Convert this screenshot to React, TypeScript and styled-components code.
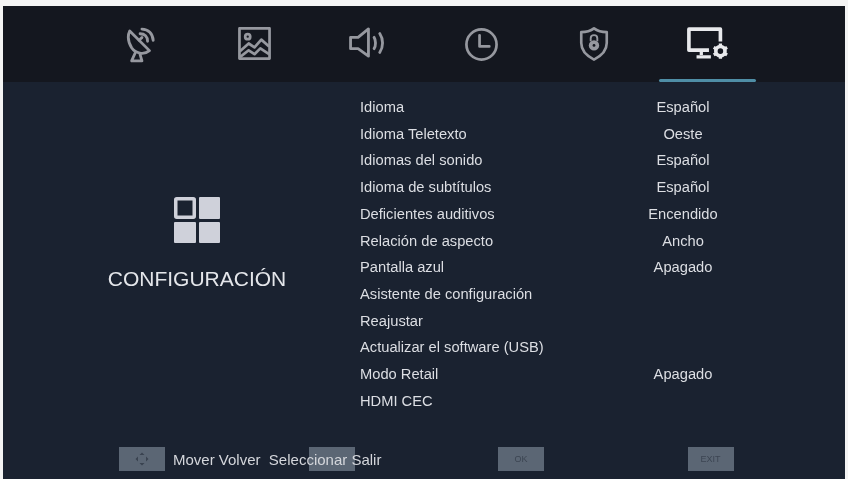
import React from 'react';
import styled, { createGlobalStyle } from 'styled-components';

const GlobalStyle = createGlobalStyle`
  html, body {
    margin: 0;
    padding: 0;
    background: #f4f4f4;
  }
  body {
    font-family: "Liberation Sans", Arial, sans-serif;
  }
`;

const Screen = styled.div`
  width: 842px;
  height: 473px;
  margin: 6px 0 0 3px;
  background: #1a2230;
  display: flex;
  flex-direction: column;
  overflow: hidden;
  filter: blur(0.45px);
`;

const TabBar = styled.div`
  height: 76px;
  flex: none;
  background: #14171f;
  padding-left: 81px;
  display: flex;
  box-sizing: border-box;
`;

const Tab = styled.div<{ $width: number; $active?: boolean }>`
  width: ${(p) => p.$width}px;
  height: 76px;
  box-sizing: border-box;
  display: flex;
  align-items: flex-start;
  justify-content: center;
  padding-top: 21px;
  color: ${(p) => (p.$active ? '#e8e9ec' : '#96989f')};
  position: relative;
  &::after {
    content: '';
    display: ${(p) => (p.$active ? 'block' : 'none')};
    position: absolute;
    left: 50%;
    bottom: 0;
    width: 97px;
    height: 3px;
    margin-left: -49px;
    border-radius: 2px;
    background: #4f8ea6;
  }
  svg {
    display: block;
  }
`;

const Main = styled.div`
  flex: 1;
  display: flex;
  min-height: 0;
`;

const SidePanel = styled.div`
  width: 357px;
  flex: none;
  box-sizing: border-box;
  padding: 115px 0 0 31px;
  display: flex;
  flex-direction: column;
  align-items: center;
`;

const SideIcon = styled.svg`
  display: block;
  margin-bottom: 24px;
`;

const SideTitle = styled.div`
  font-size: 21px;
  line-height: 24px;
  color: #e4e6ea;
  white-space: nowrap;
`;

const SettingList = styled.div`
  padding-top: 12px;
  display: flex;
  flex-direction: column;
`;

const SettingRow = styled.div`
  height: 26.72px;
  line-height: 26.72px;
  display: grid;
  grid-template-columns: 245px 156px;
  font-size: 14.7px;
  color: #dcdee3;
  white-space: nowrap;
`;

const SettingValue = styled.span`
  text-align: center;
`;

const Footer = styled.div`
  height: 32px;
  flex: none;
  padding-left: 116px;
  display: flex;
  align-items: flex-start;
  box-sizing: border-box;
`;

const FooterCell = styled.div`
  width: 189.5px;
  flex: none;
  display: flex;
  align-items: center;
  gap: 8px;
`;

const KeyCap = styled.div`
  width: 46px;
  height: 24px;
  flex: none;
  background: #5b6674;
  color: #3c4552;
  font-size: 9px;
  display: flex;
  align-items: center;
  justify-content: center;
`;

const FooterLabel = styled.span`
  position: relative;
  z-index: 1;
  font-size: 15px;
  color: #d4d6db;
  white-space: pre;
`;

const settings: [string, string][] = [
  ['Idioma', 'Español'],
  ['Idioma Teletexto', 'Oeste'],
  ['Idiomas del sonido', 'Español'],
  ['Idioma de subtítulos', 'Español'],
  ['Deficientes auditivos', 'Encendido'],
  ['Relación de aspecto', 'Ancho'],
  ['Pantalla azul', 'Apagado'],
  ['Asistente de configuración', ''],
  ['Reajustar', ''],
  ['Actualizar el software (USB)', ''],
  ['Modo Retail', 'Apagado'],
  ['HDMI CEC', ''],
];

const SatelliteIcon = () => (
  <svg width="30" height="36" viewBox="0 0 32 38" fill="none" stroke="currentColor" strokeWidth="3" strokeLinejoin="round" strokeLinecap="round">
    <path d="M4 4 L25 25 C19 30 10 28 6 22 C2.500 16 1 10 4 4 Z" />
    <path d="M10 27 L6 36 H17 L15 29" />
    <path d="M15 7 C20 7 23 10 23 15" />
    <path d="M17 2 C24 2 28.500 7 29 14" />
    <path d="M14 14 L17 11" />
  </svg>
);

const PictureIcon = () => (
  <svg width="33" height="33" viewBox="0 0 34 34" fill="none" stroke="currentColor" strokeWidth="2.8" strokeLinejoin="round">
    <rect x="1.500" y="1.500" width="31" height="31" />
    <circle cx="10" cy="10" r="2.600" />
    <path d="M2 25 L11 17 L17 21 L24 13 L32 20" />
    <path d="M2 31 L11 24 L17 28 L23 22 L32 28" />
  </svg>
);

const SpeakerIcon = () => (
  <svg width="39" height="32" viewBox="0 0 40 34" fill="none" stroke="currentColor" strokeWidth="3" strokeLinejoin="round" strokeLinecap="round">
    <path d="M21 2 V31 L10 23 H2 V11 H10 Z" />
    <path d="M27 11 C29 14 29 20 27 23" />
    <path d="M33 7 C37 13 37 21 33 27" />
  </svg>
);

const ClockIcon = () => (
  <svg width="35" height="35" viewBox="0 0 36 36" fill="none" stroke="currentColor" strokeWidth="2.8" strokeLinecap="round" strokeLinejoin="round">
    <circle cx="18" cy="18" r="15.500" />
    <path d="M16 8.500 V20 H26" />
  </svg>
);

const ShieldIcon = () => (
  <svg width="30" height="34" viewBox="0 0 30 36" fill="none" stroke="currentColor" strokeWidth="2.8" strokeLinejoin="round">
    <path d="M15 1.500 C19 4.500 24 5.500 28.500 5.500 V17 C28.500 25 22 31 15 34.500 C8 31 1.500 25 1.500 17 V5.500 C6 5.500 11 4.500 15 1.500 Z" />
    <path d="M11.500 15 V12 C11.500 7.500 18.500 7.500 18.500 12 V15" strokeWidth="2" />
    <circle cx="15" cy="19.500" r="5.500" fill="currentColor" stroke="none" />
    <circle cx="15" cy="19.500" r="1.500" fill="#14171f" stroke="none" />
  </svg>
);

const SystemIcon = () => (
  <svg width="42" height="33" viewBox="0 0 44 34" fill="none" stroke="currentColor" strokeLinejoin="round">
    <path d="M35 15 V2 H2 V24 H23" strokeWidth="3.800" />
    <path d="M15 26 V29 M10 31 H25" strokeWidth="3.400" />
    <circle cx="35" cy="25" r="4.800" strokeWidth="3.800" />
    <path d="M35 17 V19.500 M35 30.500 V33 M28 21 L30.300 22.300 M39.700 27.700 L42 29 M28 29 L30.300 27.700 M39.700 22.300 L42 21" strokeWidth="3.400" />
  </svg>
);

const ArrowsGlyph = () => (
  <svg width="14" height="14" viewBox="0 0 14 14" fill="#3a4350">
    <path d="M7 0.500 L9.500 3 H4.500 Z M7 13.500 L9.500 11 H4.500 Z M0.500 7 L3 4.500 V9.500 Z M13.500 7 L11 4.500 V9.500 Z" />
  </svg>
);

const App = () => (
  <>
    <GlobalStyle />
    <Screen>
      <TabBar>
        <Tab $width={114}><SatelliteIcon /></Tab>
        <Tab $width={113}><PictureIcon /></Tab>
        <Tab $width={113}><SpeakerIcon /></Tab>
        <Tab $width={114}><ClockIcon /></Tab>
        <Tab $width={112}><ShieldIcon /></Tab>
        <Tab $width={115} $active><SystemIcon /></Tab>
      </TabBar>
      <Main>
        <SidePanel>
          <SideIcon width="46" height="46" viewBox="0 0 46 46">
            <rect x="1.750" y="1.750" width="18.500" height="18.500" rx="1" fill="#1a2230" stroke="#cfd1da" strokeWidth="3.500" />
            <rect x="25" y="0" width="21" height="22" rx="1" fill="#cfd1da" />
            <rect x="0" y="25" width="22" height="21" rx="1" fill="#cfd1da" />
            <rect x="25" y="25" width="21" height="21" rx="1" fill="#cfd1da" />
          </SideIcon>
          <SideTitle>CONFIGURACIÓN</SideTitle>
        </SidePanel>
        <SettingList>
          {settings.map(([label, value]) => (
            <SettingRow key={label}>
              <span>{label}</span>
              <SettingValue>{value}</SettingValue>
            </SettingRow>
          ))}
        </SettingList>
      </Main>
      <Footer>
        <FooterCell>
          <KeyCap><ArrowsGlyph /></KeyCap>
          <FooterLabel>Mover Volver  Seleccionar Salir</FooterLabel>
        </FooterCell>
        <FooterCell><KeyCap /></FooterCell>
        <FooterCell><KeyCap>OK</KeyCap></FooterCell>
        <FooterCell><KeyCap>EXIT</KeyCap></FooterCell>
      </Footer>
    </Screen>
  </>
);

export default App;
